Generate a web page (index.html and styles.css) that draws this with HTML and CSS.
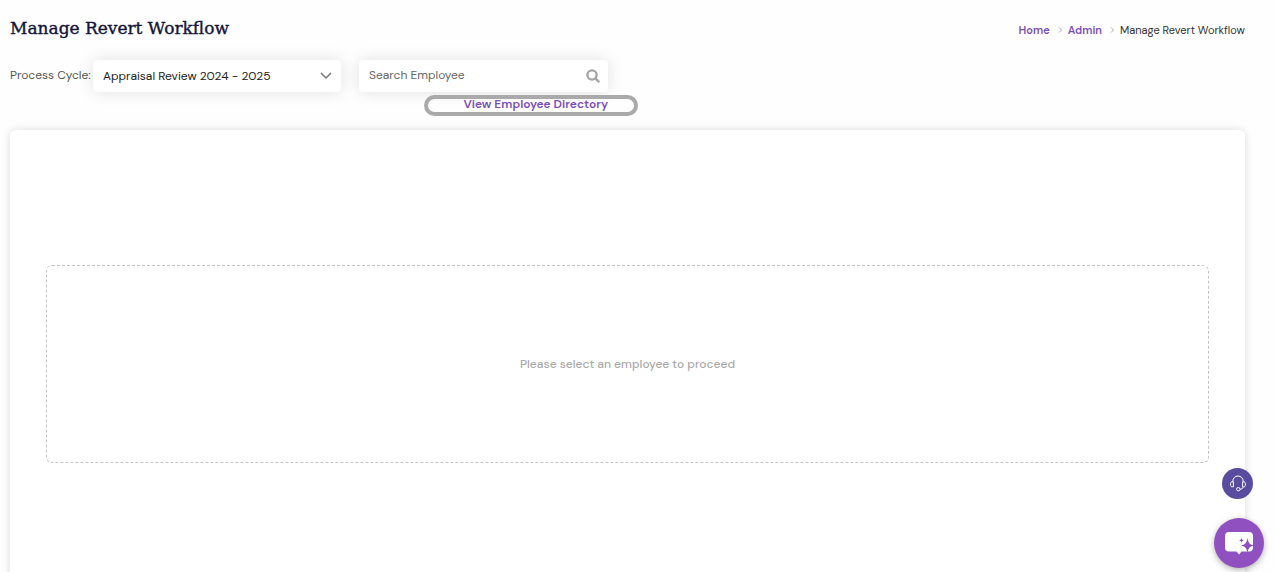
FILE: index.html
```html
<!DOCTYPE html>
<html lang="en">
<head>
<meta charset="utf-8">
<meta name="viewport" content="width=device-width, initial-scale=1">
<title>Manage Revert Workflow</title>
<link rel="stylesheet" href="styles.css">
</head>
<body>
<header class="page-header">
  <h1 class="page-title">Manage Revert Workflow</h1>
  <nav class="breadcrumb" aria-label="Breadcrumb">
    <a href="#">Home</a>
    <svg class="crumb-sep" viewBox="0 0 5 8" aria-hidden="true"><path d="M1 1.500l2.500 2.500-2.500 2.500"/></svg>
    <a href="#">Admin</a>
    <svg class="crumb-sep" viewBox="0 0 5 8" aria-hidden="true"><path d="M1 1.500l2.500 2.500-2.500 2.500"/></svg>
    <span>Manage Revert Workflow</span>
  </nav>
</header>
<main>
  <form class="filters">
    <label class="filter-label" for="cycle">Process Cycle:</label>
    <div class="field">
      <select class="control" id="cycle"><option>Appraisal Review 2024 - 2025</option></select>
      <svg class="chevron" viewBox="0 0 12 8" aria-hidden="true"><path d="M1 1l5 5 5-5"/></svg>
    </div>
    <div class="search">
      <div class="field">
        <input class="control" type="text" placeholder="Search Employee" aria-label="Search Employee">
        <button class="search-button" type="button" aria-label="Search">
          <svg viewBox="0 0 14 14" aria-hidden="true"><circle cx="6" cy="6" r="4.6"/><path d="M9.4 9.4l3.8 3.8"/></svg>
        </button>
      </div>
      <a class="directory-link" href="#">View Employee Directory</a>
    </div>
  </form>
  <section class="panel">
    <p class="empty">Please select an employee to proceed</p>
  </section>
</main>
<div class="floating">
  <button class="support" type="button" aria-label="Support">
    <svg viewBox="0 0 18 18" aria-hidden="true"><path d="M3.800 7V6.200a5.200 5.200 0 0 1 10.400 0V7M4.400 6.800H3.200C2.200 6.800 1.600 7.500 1.600 8.300v1.900c0 .9.600 1.600 1.600 1.600h1.200zM13.600 6.800h1.200c1 0 1.600.7 1.600 1.500v1.900c0 .9-.6 1.600-1.600 1.600h-1.200zM14.200 11.800c-.2 1.600-1.200 2.300-3.200 2.400"/><circle cx="9.300" cy="14.200" r="1.700"/></svg>
  </button>
  <button class="chat" type="button" aria-label="Chat assistant">
    <svg viewBox="0 0 30 26" aria-hidden="true">
      <path class="bubble" d="M5 2h20a4 4 0 0 1 4 4v11.500a4 4 0 0 1-4 4h-7.500l-2.500 3-2.500-3H5a4 4 0 0 1-4-4V6a4 4 0 0 1 4-4z"/>
      <path class="spark" d="M23.500 8c.9 5 2.200 6.600 6.500 7.500-4.300.9-5.600 2.500-6.500 7.500-.9-5-2.200-6.600-6.500-7.500 4.300-.9 5.600-2.500 6.500-7.500zM17.500 7.800c.3 1.700.8 2.300 2.400 2.600-1.600.3-2.100.9-2.400 2.600-.3-1.700-.8-2.300-2.400-2.600 1.600-.3 2.100-.9 2.400-2.600z"/>
    </svg>
  </button>
</div>
</body>
</html>
```
FILE: styles.css
```css
* { box-sizing: border-box; }
html { scrollbar-width: none; }
body {
  margin: 0;
  padding: 14px 30px 30px 10px;
  background: #fefefe;
  color: #333;
  font: 12px/16px "DM Sans", "Open Sans", sans-serif;
  font-optical-sizing: none;
}
.page-header {
  display: flex;
  justify-content: space-between;
  align-items: flex-start;
  min-height: 30px;
}
.page-title {
  margin: 0;
  color: #15163a;
  font: 500 17px/28px "Roboto Slab", "DejaVu Serif", serif;
  -webkit-text-stroke: 0.4px currentColor;
}
.breadcrumb {
  display: flex;
  align-items: center;
  gap: 5px;
  padding-top: 8px;
  font-size: 11px;
  font-optical-sizing: auto;
}
a { color: #7b4fb8; font-weight: 600; text-decoration: none; }
.crumb-sep {
  width: 5px;
  height: 8px;
  margin-left: 3px;
  fill: none;
  stroke: #aaa;
}
.filters { display: flex; align-items: flex-start; margin-top: 16px; }
.filter-label { width: 83px; white-space: nowrap; line-height: 30px; color: #555; }
.field { position: relative; width: 248px; }
.control {
  display: block;
  width: 100%;
  height: 32px;
  padding: 0 36px 0 10px;
  border: 0;
  border-radius: 4px;
  background: #fff;
  box-shadow: 0 0 16px rgba(0, 0, 0, 0.12);
  color: #222;
  font: inherit;
  font-optical-sizing: inherit;
  appearance: none;
}
input.control { padding-bottom: 2px; }
.control::placeholder { color: #666; opacity: 1; }
.chevron {
  position: absolute;
  top: 12px;
  right: 9px;
  width: 12px;
  height: 8px;
  fill: none;
  stroke: #777;
  stroke-width: 1.5;
  pointer-events: none;
}
.search { display: flex; flex-direction: column; margin-left: 18px; }
.search .field { width: 249px; }
.search-button {
  position: absolute;
  top: 9px;
  right: 8px;
  width: 14px;
  height: 14px;
  padding: 0;
  border: 0;
  background: none;
}
.search-button svg {
  display: block;
  fill: none;
  stroke: #a5a5a5;
  stroke-width: 2.4;
}
.directory-link { position: relative; align-self: flex-end; margin-top: 4px; }
.directory-link::after {
  content: "";
  position: absolute;
  inset: -1px -30px -4px -39px;
  border: 4px solid #aaa;
  border-radius: 12px;
}
.panel {
  margin-top: 18px;
  padding: 135px 36px;
  border-radius: 6px;
  background: #fff;
  box-shadow: 0 0 8px rgba(0, 0, 0, 0.14);
}
.empty {
  margin: 0;
  padding: 90px 16px;
  border: 1px dashed #c4c4c4;
  border-radius: 6px;
  color: #aaa;
  font-weight: 500;
  text-align: center;
}
.floating {
  position: fixed;
  right: 11px;
  bottom: 4px;
  display: flex;
  flex-direction: column;
  align-items: flex-end;
  gap: 19px;
}
.floating button {
  display: grid;
  place-items: center;
  padding: 0;
  border: 0;
  border-radius: 50%;
}
.support { width: 31px; height: 31px; margin-right: 11px; background: #594ca0; }
.support svg { width: 18px; height: 18px; fill: none; stroke: #fff; }
.chat {
  width: 50px;
  height: 50px;
  background: #9050c0;
  box-shadow: 0 2px 6px rgba(0, 0, 0, 0.3);
}
.chat svg { width: 30px; height: 26px; }
.bubble { fill: #fff; }
.spark { fill: #9050c0; }
```
